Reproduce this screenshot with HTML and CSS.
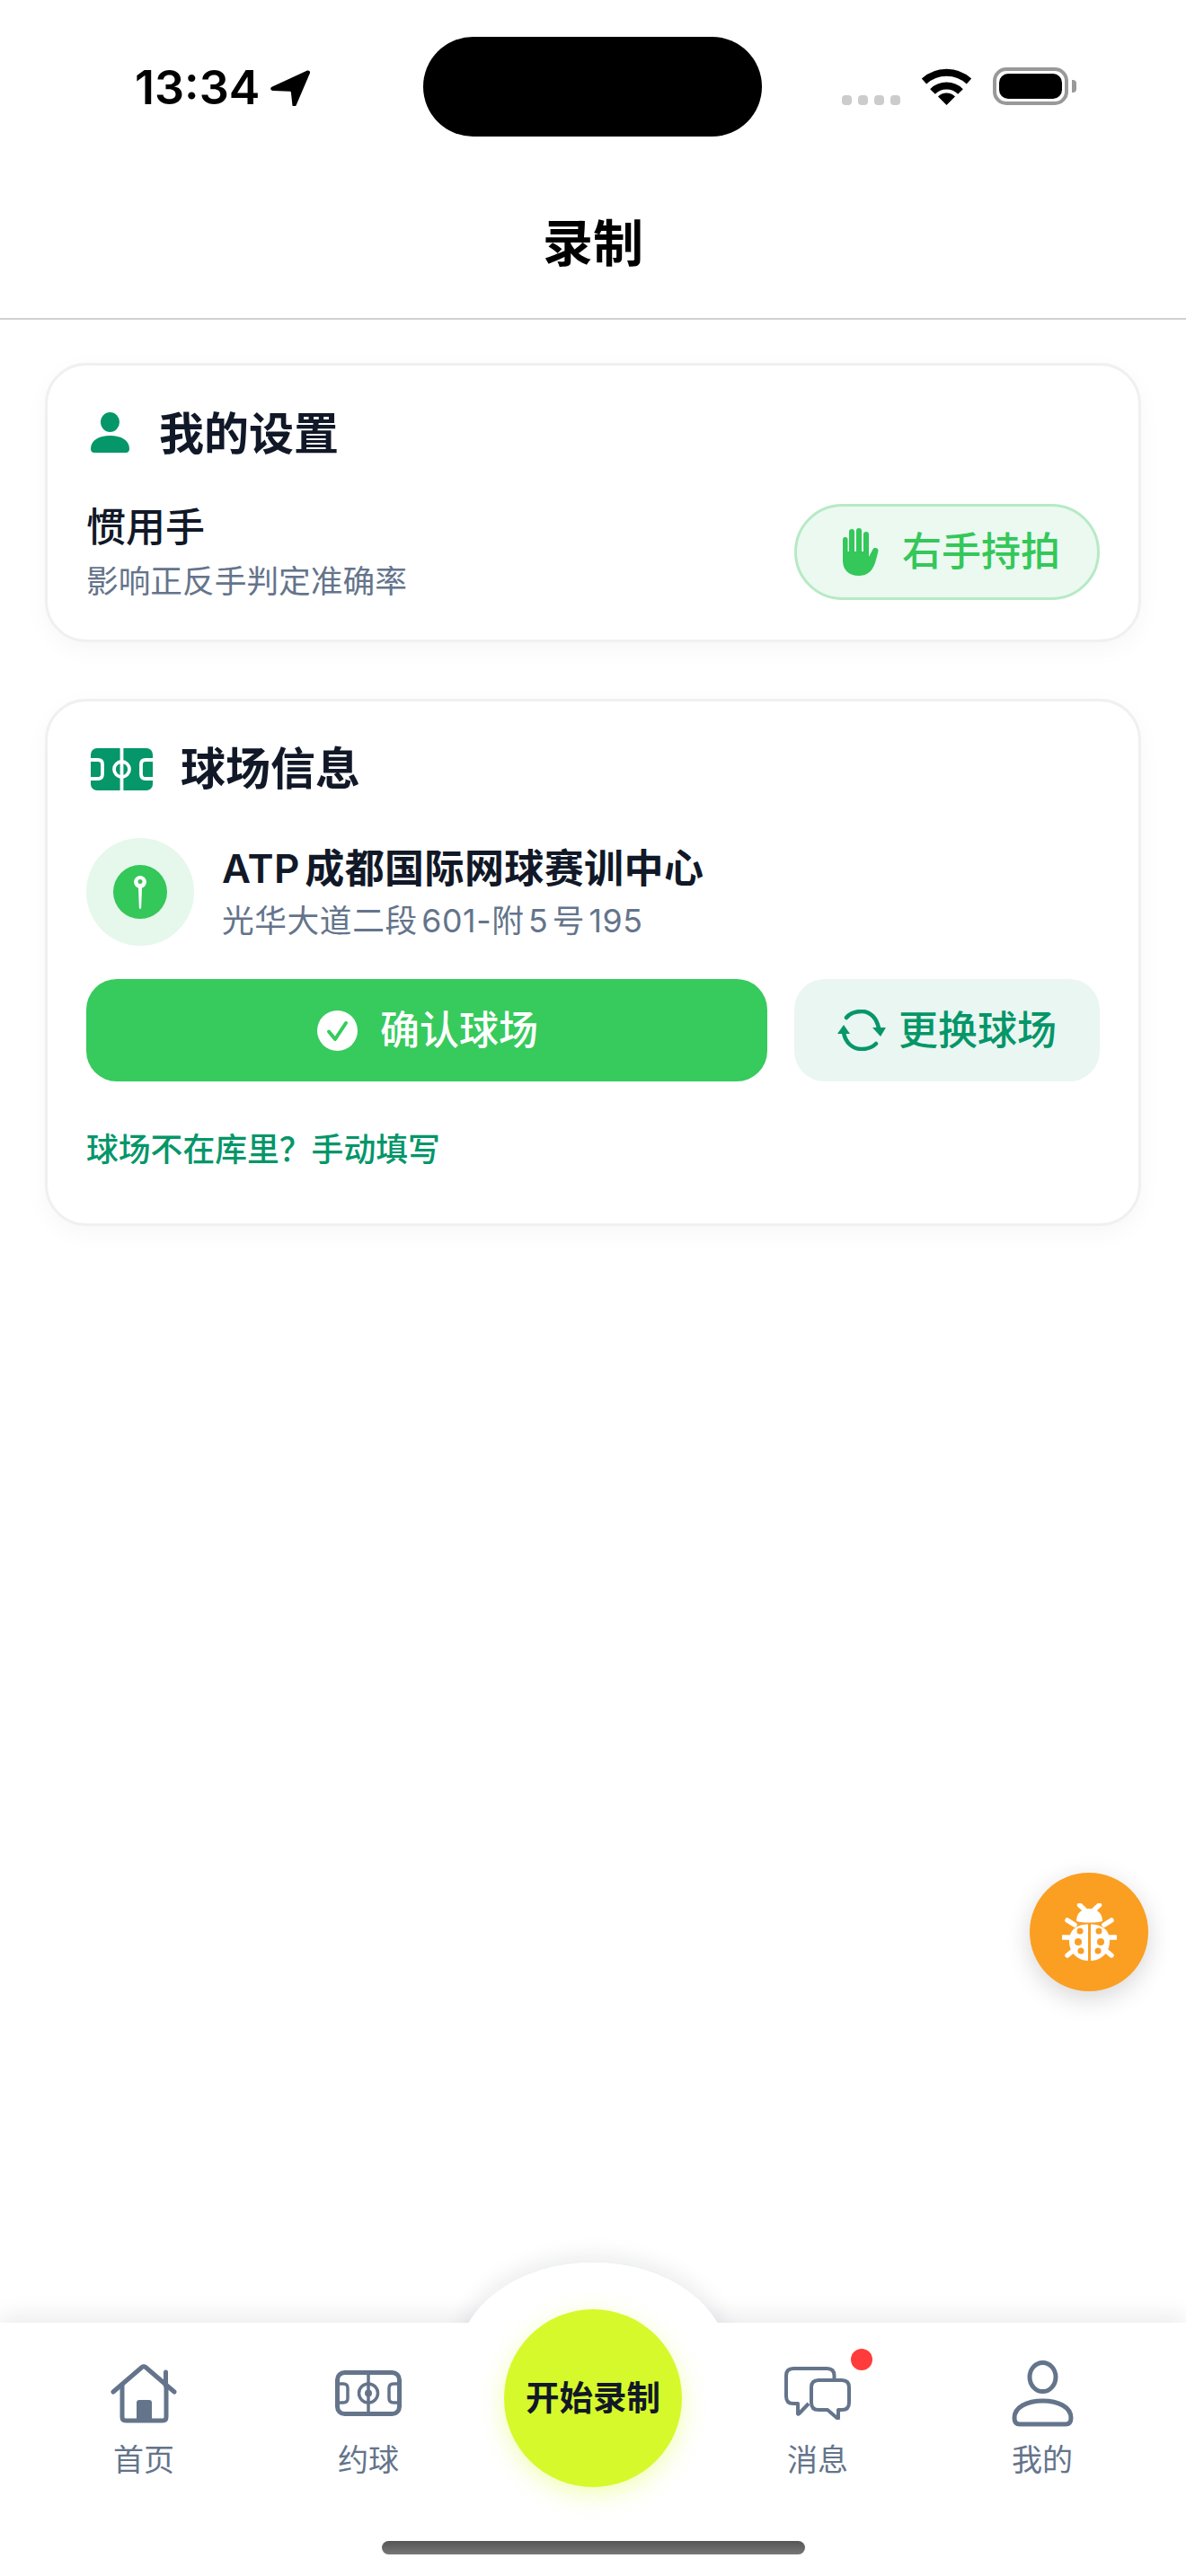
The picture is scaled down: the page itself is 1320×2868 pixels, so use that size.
FILE: index.html
```html
<!DOCTYPE html>
<html lang="zh-CN">
<head>
<meta charset="utf-8">
<title>录制</title>
<link rel="stylesheet" href="styles.css">
</head>
<body>
<header class="status">
  <div class="status-left">
    <span class="time">13:34</span>
    <svg class="loc-arrow" viewBox="0 0 44 40"><path d="M41 .6 2 18.400c-3 1.500-2 4.600 1 4.700l18.500.6c.8 0 1.300.5 1.400 1.300l1.500 13.800c.3 2.900 3.200 3.300 4.100.7L43.900 3.400C44.500 1.400 43 -.2 41 .6z"/></svg>
  </div>
  <div class="island"></div>
  <div class="status-right">
    <div class="signal"><i></i><i></i><i></i><i></i></div>
    <svg class="wifi" viewBox="0 0 57 42"><path class="wifi-arc" d="M3.500 15.500A37 37 0 0 1 53.500 15.500"/><path class="wifi-arc" d="M13 27A22 22 0 0 1 44 27"/><path d="M28.500 42 19 32.500a13.400 13.400 0 0 1 19 0z"/></svg>
    <div class="battery"><div class="battery-fill"></div></div>
    <div class="battery-nub"></div>
  </div>
</header>

<nav class="nav"><h1 class="nav-title">录制</h1></nav>

<main class="main">
  <section class="card card-settings">
    <div class="card-head">
      <svg class="icon-person" viewBox="0 0 43 45"><ellipse cx="21.500" cy="11" rx="10.500" ry="11"/><path d="M0 40.500C0 31 9.500 26 21.500 26S43 31 43 40.500c0 3-1.500 4.500-4 4.500H4c-2.500 0-4-1.500-4-4.500z"/></svg>
      <h2 class="card-title">我的设置</h2>
    </div>
    <div class="hand-row">
      <div class="text-stack">
        <div class="hand-name">惯用手</div>
        <div class="sub-text">影响正反手判定准确率</div>
      </div>
      <div class="hand-pill">
        <svg class="icon-hand" viewBox="0 0 40 53"><rect x="0" y="10" width="5.500" height="28" rx="2.700"/><rect x="7" y="1" width="6" height="34" rx="3"/><rect x="15" y="0" width="6" height="34" rx="3"/><rect x="23" y="4" width="6" height="32" rx="3"/><path d="M0 26h29v6l4.500-8.500c1.500-2.500 6-1.500 6 1.500 0 .8-.2 1.500-.5 2.300C36.500 37 34.500 53 18 53 6 53 0 46 0 36z"/></svg>
        <span class="hand-label">右手持拍</span>
      </div>
    </div>
  </section>

  <section class="card card-court">
    <div class="card-head">
      <svg class="icon-pitch" viewBox="0 0 69 47"><rect width="69" height="47" rx="7"/><g class="pitch-lines"><path d="M34.500 0V47"/><circle cx="34.500" cy="23.500" r="8.500"/><path d="M0 13H8q5 0 5 5V29q0 5-5 5H0"/><path d="M69 13H61q-5 0-5 5V29q0 5 5 5H69"/></g></svg>
      <h2 class="card-title card-title-court">球场信息</h2>
    </div>
    <div class="court-row">
      <div class="court-badge">
        <svg class="icon-pin" viewBox="0 0 60 60"><circle class="pin-bg" cx="30" cy="30" r="30"/><path class="pin-mark" d="M30 12a7 7 0 0 1 2 13.700L31.200 47c-.1 2.600-2.300 2.600-2.400 0L28 25.700A7 7 0 0 1 30 12z"/><circle class="pin-bg" cx="30" cy="18.500" r="2.500"/></svg>
      </div>
      <div class="text-stack">
        <div class="court-name">ATP成都国际网球赛训中心</div>
        <div class="sub-text court-addr">光华大道二段601-附5号195</div>
      </div>
    </div>
    <div class="btn-row">
      <button class="btn btn-primary">
        <svg class="icon-check" viewBox="0 0 45 45"><circle cx="22.500" cy="22.500" r="22.500"/><path d="M13 23.500 20 32 32 14"/></svg>
        <span>确认球场</span>
      </button>
      <button class="btn btn-secondary">
        <svg class="icon-swap" viewBox="0 0 54 46"><path class="swap-line" d="M10 9C14 4 20 2 27 2 37 2 44 10 46 21"/><path d="M39 20H54L48 30z"/><path class="swap-line" d="M43 38C39 42 33 44 27 44 16 44 9 36 7 26"/><path d="M0 27H14L7 17z"/></svg>
        <span>更换球场</span>
      </button>
    </div>
    <a class="manual-link">球场不在库里？手动填写</a>
  </section>
</main>

<button class="fab" aria-label="调试">
  <svg class="icon-bug" viewBox="0 0 61 64">
    <g class="bug-legs"><path d="M19.500 2 25 7"/><path d="M41.500 2 36 7"/><path d="M6 19 14 24"/><path d="M55 19 47 24"/><path d="M1.500 38H8"/><path d="M59.500 38H53"/><path d="M6 58 12 53"/><path d="M55 58 49 53"/></g>
    <path d="M16 20C16 11 22 6 30.500 6S45 11 45 20C36 22 25 22 16 20z"/>
    <path d="M29 23.500C17 23.500 8 29 8 42 8 55 17 63.500 29 64z"/>
    <path d="M32 23.500C44 23.500 53 29 53 42 53 55 44 63.500 32 64z"/>
    <g class="bug-dots"><circle cx="20" cy="31" r="3.500"/><circle cx="18" cy="43" r="4"/><circle cx="21" cy="53" r="3.500"/><circle cx="41" cy="31" r="3.500"/><circle cx="43" cy="43" r="4"/><circle cx="40" cy="53" r="3.500"/></g>
  </svg>
</button>

<footer class="tabbar">
  <div class="hump-shadow"></div>
  <div class="hump-cap"></div>
  <div class="tabs">
    <div class="tab">
      <div class="tab-icon">
        <svg class="icon-home" viewBox="0 0 74 66"><g class="tab-line"><path d="M3 31 35 3.500q2-1.500 4 0L71 31"/><path d="M13 24V59q0 4 4 4H58q4 0 4-4V24"/><path d="M61.500 9V24"/></g><path class="tab-fill" d="M29 43q0-3 3-3H43q3 0 3 3V62H29z"/></svg>
      </div>
      <span class="tab-label">首页</span>
    </div>
    <div class="tab">
      <div class="tab-icon">
        <svg class="icon-pitch-line" viewBox="0 0 74 51"><rect class="tab-line" x="2.500" y="2.500" width="69" height="46" rx="8"/><g class="tab-thin"><path d="M37 2V49"/><circle cx="37" cy="25.500" r="10.500"/><path d="M3 15H9q5 0 5 5V31q0 5-5 5H3"/><path d="M71 15H65q-5 0-5 5V31q0 5 5 5H71"/></g><circle class="tab-fill" cx="37" cy="25.500" r="4"/></svg>
      </div>
      <span class="tab-label">约球</span>
    </div>
    <div class="tab tab-center">
      <button class="record-btn">开始录制</button>
    </div>
    <div class="tab">
      <div class="tab-icon">
        <svg class="icon-msg" viewBox="0 0 74 59"><g class="tab-mid"><path d="M55.500 14V10q0-8-8-8H10q-8 0-8 8V33q0 8 8 8h5V52q0 1.500 1.500 0L27 41"/><path d="M38 15H64q8 0 8 8V40q0 8-8 8H60V57q0 1.500-1.500 0L48 48H38q-8 0-8-8V23q0-8 8-8z"/></g></svg>
        <i class="tab-dot"></i>
      </div>
      <span class="tab-label">消息</span>
    </div>
    <div class="tab">
      <div class="tab-icon">
        <svg class="icon-profile" viewBox="0 0 69 74"><g class="tab-line"><ellipse cx="34.500" cy="18.500" rx="14.500" ry="16"/><path d="M3 64C3 52 17 45 34.500 45S66 52 66 64q0 7-6 7H9q-6 0-6-7z"/></g></svg>
      </div>
      <span class="tab-label">我的</span>
    </div>
  </div>
  <div class="home-indicator"></div>
</footer>
</body>
</html>
```
FILE: styles.css
```css
* { box-sizing: border-box; }
html, body { margin: 0; padding: 0; }
body {
  width: 1320px;
  height: 2868px;
  display: flex;
  flex-direction: column;
  position: relative;
  overflow: hidden;
  background: #fff;
  color: #111827;
  font-family: Inter, "Noto Sans CJK SC", sans-serif;
  text-autospace: normal;
}
h1, h2 { margin: 0; }
button { border: 0; padding: 0; font: inherit; cursor: pointer; }

/* status bar */
.status {
  height: 186px;
  padding-top: 41px;
  display: grid;
  grid-template-columns: 471px 377px 1fr;
  align-items: start;
}
.status-left { display: flex; align-items: center; gap: 12px; padding: 32px 0 0 150px; }
.time { font-size: 52px; line-height: 50px; font-weight: 600; color: #000; }
.loc-arrow { width: 44px; height: 40px; fill: #000; }
.island { height: 111px; border-radius: 56px; background: #000; }
.status-right { display: flex; align-items: flex-end; height: 76px; padding-left: 89px; }
.signal { display: flex; gap: 7px; width: 65px; margin-right: 23px; }
.signal i { width: 11px; height: 11px; border-radius: 4px; background: #ccc; }
.wifi { width: 57px; height: 42px; fill: #000; margin-right: 23px; }
.wifi-arc { fill: none; stroke: #000; stroke-width: 8; }
.battery { width: 84px; height: 42px; padding: 3px; border: 4px solid #999; border-radius: 15px; }
.battery-fill { height: 100%; border-radius: 10px; background: #000; }
.battery-nub { width: 5px; height: 14px; margin: 0 0 14px 4px; border-radius: 0 4px 4px 0; background: #999; }

/* nav */
.nav {
  height: 170px;
  border-bottom: 2px solid #d0d0d0;
  display: flex;
  align-items: center;
  justify-content: center;
}
.nav-title { padding-top: 2px; font-size: 56px; font-weight: 700; line-height: 64px; color: #000; }

/* cards */
.main { flex: 1; padding: 48px 50px 0; display: flex; flex-direction: column; gap: 63px; }
.card {
  background: #fff;
  border: 3px solid #f0f0f0;
  border-radius: 46px;
  padding: 44px 43px 43px;
  box-shadow: 0 8px 28px rgba(0, 0, 0, .035);
}
.card-court { padding-top: 45px; padding-bottom: 57px; }
.card-head { height: 60px; display: flex; align-items: center; }
.card-title { font-size: 50px; line-height: 60px; font-weight: 700; color: #111827; }
.card-settings .card-title { padding-top: 3px; }
.icon-person { width: 43px; height: 45px; margin: 0 33px 0 5px; fill: #059669; }
.icon-pitch { width: 69px; height: 47px; margin: 0 31px 0 5px; fill: #059669; }
.pitch-lines { fill: none; stroke: #fff; stroke-width: 3.800; }
.sub-text { margin-top: 10px; font-size: 35.700px; line-height: 44px; color: #64748b; }
.hand-row { margin-top: 48px; display: flex; justify-content: space-between; align-items: center; }
.hand-name { font-size: 44px; line-height: 56px; font-weight: 500; color: #111827; }
.hand-pill {
  width: 340px;
  height: 107px;
  border: 3px solid #b6eac5;
  border-radius: 54px;
  background: #ebf9f0;
  display: flex;
  align-items: center;
  padding-left: 51px;
}
.icon-hand { width: 40px; height: 53px; margin-right: 26px; fill: #34c759; }
.hand-label { font-size: 44px; line-height: 56px; font-weight: 500; color: #34c759; }

.court-row { margin-top: 47px; display: flex; align-items: center; gap: 31px; }
.court-badge {
  width: 120px;
  height: 120px;
  border-radius: 50%;
  background: #e6f7ec;
  display: flex;
  align-items: center;
  justify-content: center;
}
.icon-pin { width: 60px; height: 60px; }
.pin-bg { fill: #34c759; }
.pin-mark { fill: #fff; }
.court-name { font-size: 44px; line-height: 56px; font-weight: 600; letter-spacing: .4px; color: #111827; }
.court-row .court-addr { margin-top: 8px; letter-spacing: .6px; }

.btn-row { margin-top: 37px; display: grid; grid-template-columns: 758px 340px; gap: 30px; }
.btn {
  height: 114px;
  border-radius: 34px;
  display: flex;
  align-items: center;
  justify-content: center;
  font-size: 44px;
  line-height: 56px;
  font-weight: 500;
}
.btn-primary { background: #37ca5d; color: #fff; gap: 25px; padding-left: 2px; }
.btn-secondary { background: #eaf6f1; color: #059669; gap: 14px; }
.icon-check { width: 45px; height: 45px; fill: #fff; }
.icon-check path { fill: none; stroke: #37ca5d; stroke-width: 4; stroke-linecap: round; stroke-linejoin: round; }
.icon-swap { width: 54px; height: 46px; fill: #059669; }
.swap-line { fill: none; stroke: #059669; stroke-width: 4.500; stroke-linecap: round; }
.manual-link { display: block; margin-top: 51px; font-size: 35.800px; line-height: 50px; font-weight: 500; color: #059669; }

/* floating debug button */
.fab {
  position: absolute;
  left: 1146px;
  top: 2085px;
  width: 132px;
  height: 132px;
  border-radius: 50%;
  background: #fa9f22;
  box-shadow: 0 8px 28px rgba(0, 0, 0, .16);
  display: flex;
  align-items: center;
  justify-content: center;
}
.icon-bug { width: 61px; height: 64px; fill: #fff; }
.bug-legs { fill: none; stroke: #fff; stroke-width: 5.500; stroke-linecap: round; }
.bug-dots { fill: #fa9f22; }

/* tab bar */
.tabbar {
  position: relative;
  height: 282px;
  flex: none;
  background: #fff;
  box-shadow: 0 -6px 26px rgba(15, 23, 42, .09);
}
.hump-shadow, .hump-cap {
  position: absolute;
  left: 510px;
  top: -67px;
  width: 300px;
  height: 218px;
  border-radius: 50%;
  background: #fff;
}
.hump-shadow { z-index: -1; box-shadow: 0 -6px 26px rgba(15, 23, 42, .09); }
.tabs {
  position: relative;
  display: grid;
  grid-template-columns: repeat(5, 250px);
  padding: 0 35px;
}
.tab { display: flex; flex-direction: column; align-items: center; }
.tab-icon { position: relative; height: 128px; display: flex; justify-content: center; align-items: flex-end; }
.tab-label { margin-top: 4px; font-size: 34px; line-height: 42px; color: #64748b; }
.tab-line { fill: none; stroke: #64748b; stroke-width: 5; stroke-linecap: round; stroke-linejoin: round; }
.tab-thin { fill: none; stroke: #64748b; stroke-width: 3.500; }
.tab-mid { fill: none; stroke: #64748b; stroke-width: 4; stroke-linejoin: round; }
.tab-fill { fill: #64748b; }
.icon-home { width: 74px; height: 66px; margin-bottom: 16px; }
.icon-pitch-line { width: 74px; height: 51px; margin-bottom: 24px; }
.icon-msg { width: 74px; height: 59px; margin-bottom: 20px; }
.icon-profile { width: 69px; height: 74px; margin-bottom: 12px; }
.tab-dot {
  position: absolute;
  left: 74px;
  top: 29px;
  width: 24px;
  height: 24px;
  border-radius: 50%;
  background: #ff3b3b;
}
.record-btn {
  position: absolute;
  top: -15px;
  width: 198px;
  height: 198px;
  border-radius: 50%;
  background: #d6f92b;
  color: #111827;
  font-size: 37.500px;
  font-weight: 700;
  line-height: 48px;
  box-shadow: 0 8px 28px rgba(214, 249, 43, .35);
}
.home-indicator {
  position: absolute;
  left: 425px;
  top: 243px;
  width: 471px;
  height: 15px;
  border-radius: 8px;
  background: linear-gradient(#555, #777);
}
```
